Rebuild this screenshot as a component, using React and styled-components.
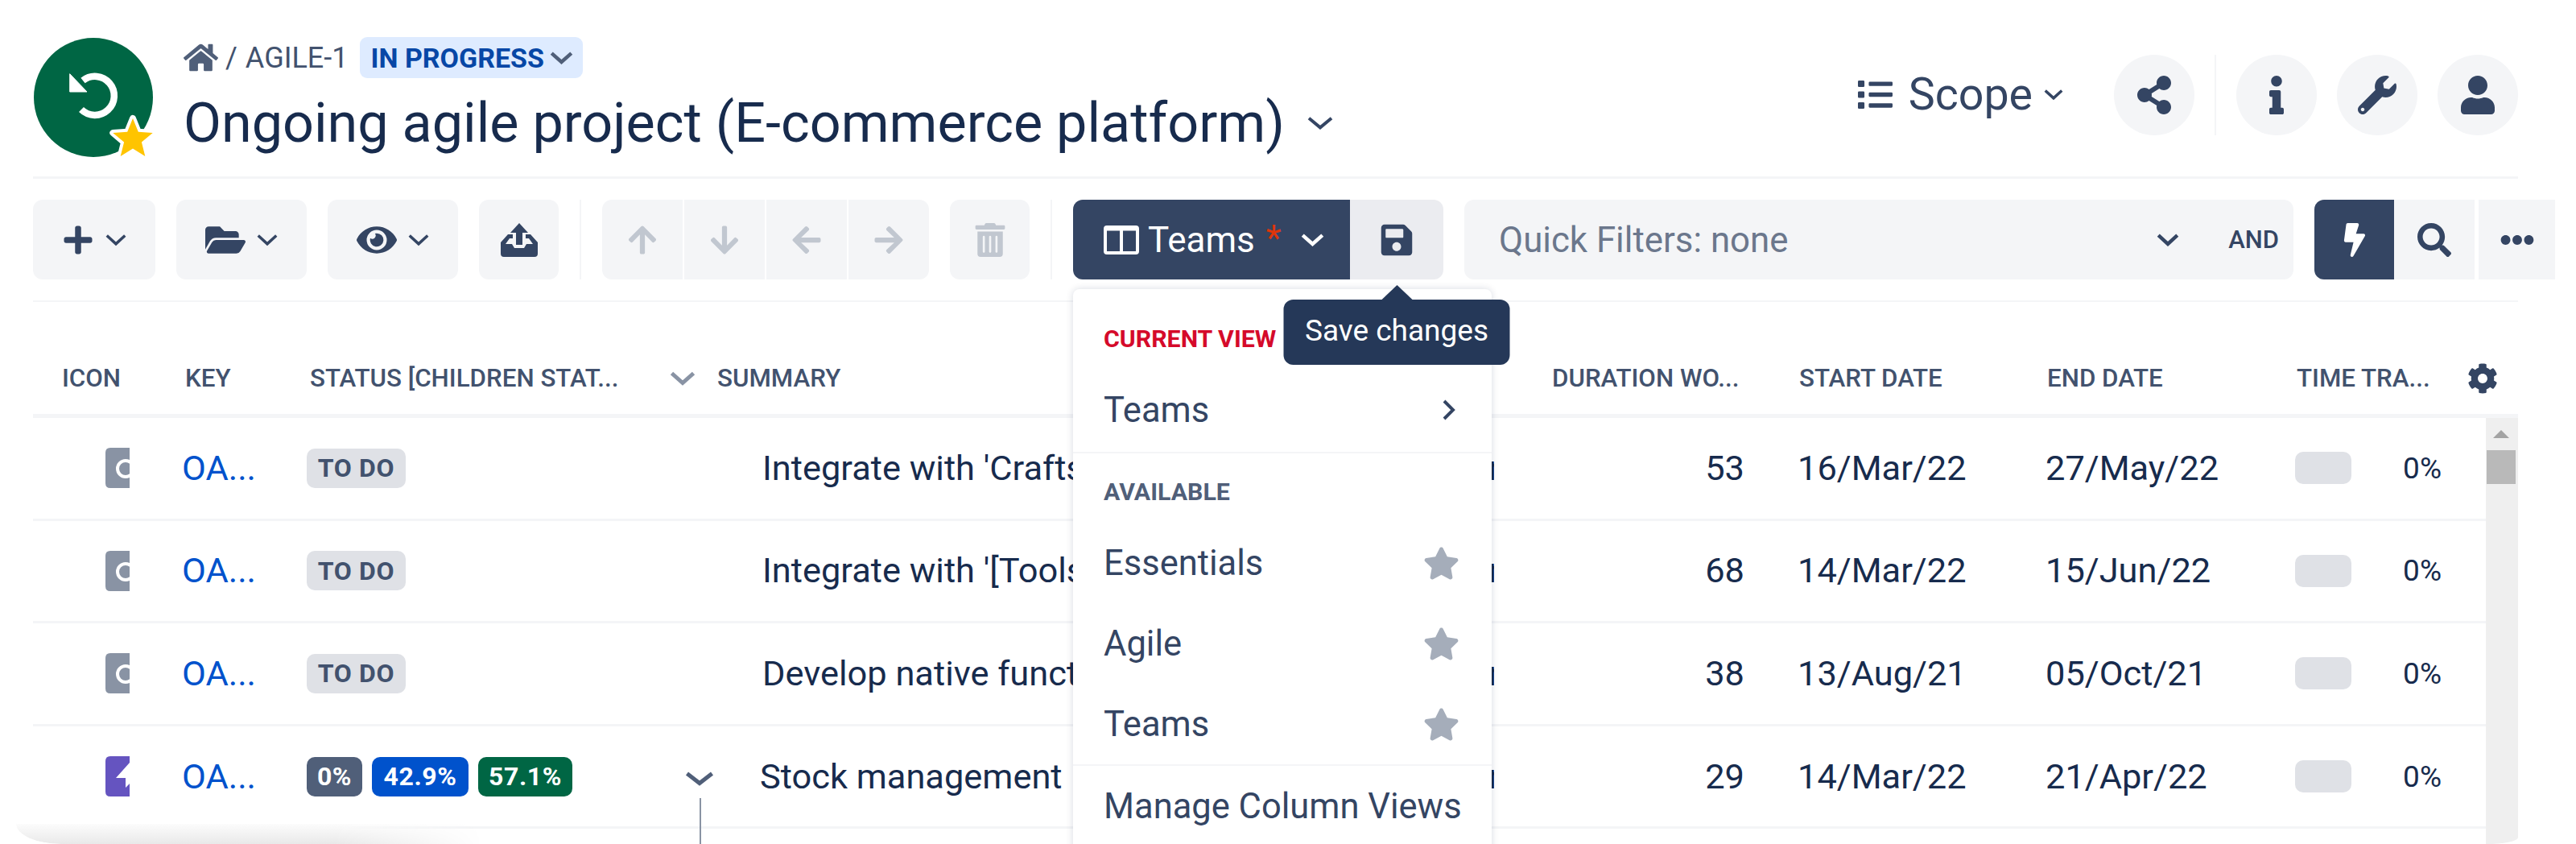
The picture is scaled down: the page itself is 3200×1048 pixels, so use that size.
import styled, { createGlobalStyle } from 'styled-components';
import {
  FaHome, FaPlus, FaFolderOpen, FaEye, FaArrowUp, FaArrowDown, FaArrowLeft, FaArrowRight, FaTrashAlt,
  FaSave, FaBolt, FaSearch, FaEllipsisH, FaCog, FaStar, FaShareAlt, FaInfo, FaWrench, FaUser, FaList,
} from 'react-icons/fa';

const GlobalStyle = createGlobalStyle`
  html, body {
    margin: 0;
    padding: 0;
    background: #fff;
  }
  body {
    font-family: Roboto, "Liberation Sans", sans-serif;
    color: #172b4d;
  }
`;

const Page = styled.div`
  position: relative;
  width: 3200px;
  height: 1048px;
  padding-left: 41px;
  box-sizing: border-box;
  overflow: hidden;
  background: #fff;
`;

const Header = styled.header`
  display: flex;
  justify-content: space-between;
  align-items: flex-start;
  width: 3087px;
  height: 222px;
  padding-top: 46px;
  box-sizing: border-box;
  border-bottom: 3px solid #f4f5f7;
`;

const Brand = styled.div`
  display: flex;
`;

const Logo = styled.svg`
  width: 152px;
  height: 154px;
  margin-right: 35px;
  flex: none;
`;

const Titles = styled.div`
  display: flex;
  flex-direction: column;
`;

const Crumbs = styled.div`
  display: flex;
  align-items: center;
  height: 51px;
  font-size: 36px;
  color: #42526e;
  svg:first-child {
    font-size: 43px;
    color: #505f79;
  }
`;

const Slash = styled.span`
  margin: 0 10px 0 9px;
`;

const StatusPill = styled.span`
  display: flex;
  align-items: center;
  gap: 7px;
  height: 51px;
  margin-left: 14px;
  padding: 0 12px 0 14px;
  box-sizing: border-box;
  border-radius: 9px;
  background: #deebff;
  color: #0747a6;
  font-size: 34px;
  font-weight: 700;
`;

const TitleLine = styled.h1`
  display: flex;
  align-items: center;
  gap: 28px;
  height: 80px;
  margin: 16px 0 0;
  font-size: 68.3px;
  font-weight: 400;
  color: #172b4d;
`;

const Actions = styled.div`
  display: flex;
  align-items: center;
  gap: 25px;
  margin-top: 22px;
`;

const Scope = styled.div`
  display: flex;
  align-items: center;
  margin-right: 38px;
  margin-top: -2px;
  font-size: 55.5px;
  color: #344563;
  svg:first-child {
    font-size: 43px;
    margin-right: 20px;
  }
  svg:last-child {
    margin-left: 14px;
  }
`;

const RoundButton = styled.button`
  display: flex;
  align-items: center;
  justify-content: center;
  width: 100px;
  height: 100px;
  padding: 0;
  border: 0;
  border-radius: 50%;
  background: #f4f5f7;
  color: #344563;
  font-size: 48px;
`;

const HeaderSep = styled.div`
  width: 2px;
  height: 100px;
  background: #f4f5f7;
`;

const Toolbar = styled.div`
  display: flex;
  align-items: stretch;
  gap: 26px;
  width: 3133px;
  height: 99px;
  margin-top: 26px;
`;

const ToolButton = styled.button`
  display: flex;
  align-items: center;
  justify-content: center;
  gap: 14px;
  width: ${(p) => p.$w}px;
  padding: 0;
  border: 0;
  border-radius: 12px;
  background: #f4f5f7;
  color: #344563;
  svg:first-child {
    font-size: ${(p) => p.$icon || 44}px;
  }
`;

const ToolSep = styled.div`
  width: 2px;
  background: #f4f5f7;
`;

const MoveGroup = styled.div`
  display: flex;
  gap: 2px;
`;

const MoveButton = styled.button`
  display: flex;
  align-items: center;
  justify-content: center;
  width: 100px;
  padding: 0;
  border: 0;
  background: #f4f5f7;
  color: #c1c7d0;
  font-size: 40px;
  &:first-child {
    border-radius: 12px 0 0 12px;
  }
  &:last-child {
    border-radius: 0 12px 12px 0;
  }
`;

const TrashButton = styled(ToolButton)`
  color: #c1c7d0;
`;

const ViewGroup = styled.div`
  position: relative;
  display: flex;
`;

const ViewButton = styled.button`
  display: flex;
  align-items: center;
  width: 344px;
  padding: 0 0 0 38px;
  box-sizing: border-box;
  border: 0;
  border-radius: 12px 0 0 12px;
  background: #344563;
  color: #fff;
  font-family: inherit;
  font-size: 44px;
  svg:first-child {
    margin-right: 11px;
  }
  svg:last-child {
    margin-left: 24px;
  }
`;

const Asterisk = styled.span`
  margin-left: 14px;
  margin-top: -4px;
  color: #de350b;
`;

const SaveButton = styled.button`
  position: relative;
  display: flex;
  align-items: center;
  justify-content: center;
  width: 116px;
  padding: 0;
  border: 0;
  border-radius: 0 12px 12px 0;
  background: #ebecf0;
  color: #344563;
  font-family: inherit;
  font-size: 44px;
`;

const Tooltip = styled.div`
  position: absolute;
  top: 124px;
  left: 50%;
  transform: translateX(-50%);
  z-index: 3;
  width: 281px;
  height: 81px;
  line-height: 78px;
  border-radius: 12px;
  background: #253858;
  color: #fff;
  font-size: 37px;
  text-align: center;
  white-space: nowrap;
  &::before {
    content: '';
    position: absolute;
    top: -18px;
    left: 50%;
    margin-left: -19px;
    border-left: 19px solid transparent;
    border-right: 19px solid transparent;
    border-bottom: 18px solid #253858;
  }
`;

const Menu = styled.div`
  position: absolute;
  top: 111px;
  left: 0;
  z-index: 2;
  width: 520px;
  height: 720px;
  padding-top: 52px;
  box-sizing: border-box;
  border-radius: 8px;
  background: #fff;
  box-shadow: 0 0 10px rgba(9, 30, 66, 0.16);
`;

const MenuHeading = styled.div`
  padding: ${(p) => p.$top || 0}px 38px ${(p) => p.$bottom || 0}px;
  font-size: 30.3px;
  font-weight: 700;
  line-height: 20px;
  color: ${(p) => p.$color};
  white-space: nowrap;
`;

const MenuItem = styled.div`
  display: flex;
  align-items: center;
  justify-content: space-between;
  height: ${(p) => p.$h || 100}px;
  padding: ${(p) => p.$top || 0}px 40px 0 38px;
  box-sizing: border-box;
  font-size: 43.5px;
  color: #344563;
  white-space: nowrap;
  svg {
    color: #a5adba;
    font-size: 45px;
  }
`;

const MenuArrow = styled.span`
  display: flex;
  margin-right: 5px;
`;

const MenuDivider = styled.div`
  height: 2px;
  background: #f4f5f7;
`;

const QuickFilter = styled.div`
  display: flex;
  align-items: center;
  flex: 1;
  padding: 0 18px 0 43px;
  border-radius: 12px;
  background: #f4f5f7;
`;

const QuickText = styled.span`
  flex: 1;
  font-size: 43.8px;
  color: #6b778c;
`;

const AndLabel = styled.span`
  margin-left: 61px;
  font-size: 31px;
  font-weight: 500;
  color: #344563;
`;

const ModeGroup = styled.div`
  display: flex;
`;

const ModeButton = styled.button`
  display: flex;
  align-items: center;
  justify-content: center;
  width: ${(p) => p.$w}px;
  margin-left: ${(p) => p.$gap || 0}px;
  padding: 0;
  border: 0;
  border-radius: ${(p) => (p.$active ? '12px 0 0 12px' : '0')};
  background: ${(p) => (p.$active ? '#344563' : '#f4f5f7')};
  color: ${(p) => (p.$active ? '#fff' : '#344563')};
  font-size: 42px;
`;

const TableHead = styled.div`
  display: grid;
  grid-template-columns: 185px 155px 449px 60px 970px 371px 308px 312px 277px;
  align-items: center;
  width: 3087px;
  height: 89px;
  padding-top: 50px;
  margin-top: 26px;
  border-top: 2px solid #f4f5f7;
  border-bottom: 5px solid #f4f5f7;
  font-size: 31.3px;
  font-weight: 500;
  color: #42526e;
`;

const HeadCell = styled.div`
  display: flex;
  align-items: center;
  justify-content: space-between;
  padding-left: ${(p) => p.$pad || 0}px;
  white-space: nowrap;
  color: ${(p) => (p.$muted ? '#8993a4' : 'inherit')};
`;

const GearIcon = styled(FaCog)`
  color: #344563;
  font-size: 38px;
  margin-right: 25px;
`;

const TableBody = styled.div`
  display: flex;
  width: 3087px;
  height: 529px;
`;

const Rows = styled.div`
  flex: 1;
  overflow: hidden;
`;

const Row = styled.div`
  display: grid;
  grid-template-columns: 185px 155px 449px 60px 970px 371px 308px 312px 236px;
  align-items: center;
  height: 127.6px;
  box-sizing: border-box;
  border-bottom: 3px solid #f4f5f7;
  font-size: 43.4px;
  color: #172b4d;
`;

const IconCell = styled.div`
  display: flex;
  padding-left: 90px;
`;

const IssueIcon = styled.svg`
  display: block;
  width: 30px;
  height: 50px;
`;

const KeyCell = styled.a`
  color: #0052cc;
`;

const StatusCell = styled.div`
  display: flex;
  gap: 12px;
`;

const Lozenge = styled.span`
  display: flex;
  align-items: center;
  justify-content: center;
  width: ${(p) => p.$w}px;
  height: 49px;
  border-radius: 10px;
  background: ${(p) => p.$bg};
  color: ${(p) => p.$fg || '#fff'};
  font-size: 32px;
  font-weight: 700;
  letter-spacing: 0.6px;
`;

const TreeCell = styled.div`
  position: relative;
  height: 100%;
  color: #505f79;
`;

const TreeToggle = styled.div`
  position: absolute;
  left: 21px;
  top: 50%;
  margin-top: -7px;
  display: flex;
`;

const TreeLine = styled.div`
  position: absolute;
  left: 39px;
  top: ${(p) => p.$top}px;
  bottom: ${(p) => p.$bottom}px;
  width: 2px;
  background: #8993a4;
`;

const SummaryCell = styled.div`
  display: flex;
  justify-content: space-between;
  padding-left: ${(p) => p.$pad}px;
  width: 966px;
  box-sizing: border-box;
  white-space: nowrap;
`;

const SummaryText = styled.span`
  flex: 1;
  min-width: 0;
  overflow: hidden;
`;

/* only the first stem of the last letter shows past the menu */
const SummaryEnd = styled.span`
  flex: none;
  width: 7px;
  overflow: hidden;
`;

const NumberCell = styled.div`
  padding-right: 64px;
  text-align: right;
`;

const DateCell = styled.div`
  padding-left: 2px;
`;

const TimeCell = styled.div`
  display: flex;
  align-items: center;
  justify-content: space-between;
  width: 182px;
  font-size: 37px;
`;

const TimeBar = styled.div`
  width: 70px;
  height: 40px;
  border-radius: 10px;
  background: #dfe1e6;
`;

const Scrollbar = styled.div`
  position: relative;
  flex: none;
  width: 40px;
  background: #efefef;
  border-bottom-right-radius: 40px 8px;
`;

const ScrollArrow = styled.div`
  position: absolute;
  top: 15px;
  left: 9px;
  border-left: 10px solid transparent;
  border-right: 10px solid transparent;
  border-bottom: 10px solid #a3a3a3;
`;

const ScrollThumb = styled.div`
  position: absolute;
  top: 40px;
  left: 1px;
  width: 36px;
  height: 42px;
  background: #b9b9b9;
`;

const BottomShade = styled.div`
  position: absolute;
  left: 20px;
  bottom: 0;
  width: 580px;
  height: 25px;
  border-bottom-left-radius: 56px 25px;
  background: linear-gradient(to bottom, #fcfcfc, #e9e9e9);
  mask-image: linear-gradient(to right, #000 68%, transparent);
  z-index: 1;
`;

const Chevron = ({ w, h, sw = 4, color = 'currentColor' }) => (
  <svg width={w} height={h} viewBox={`0 0 ${w} ${h}`} fill="none" stroke={color} strokeWidth={sw}>
    <polyline points={`${sw / 2},${sw * 0.7} ${w / 2},${h - sw * 0.9} ${w - sw / 2},${sw * 0.7}`} />
  </svg>
);

const UploadIcon = () => (
  <svg width="46" height="42" viewBox="0 0 46 42" fill="#344563">
    <path d="M23 0 L34 12 H27 V27 H19 V12 H12 Z" />
    <path d="M0 24 L9 14 H15 V19 H11 L6 26 H14 L17 31 H29 L32 26 H40 L35 19 H31 V14 H37 L46 24 V38 Q46 42 42 42 H4 Q0 42 0 38 Z" />
  </svg>
);

const ColumnsIcon = () => (
  <svg width="44" height="38" viewBox="0 0 44 38" fill="none" stroke="#fff">
    <rect x="2" y="3" width="40" height="32" rx="2" strokeWidth="4" />
    <path d="M22 3 V35" strokeWidth="4" />
    <path d="M2 5 H42" strokeWidth="5" />
  </svg>
);

const rows = [
  { color: '#8993a4', kind: 'ring', status: 'todo', text: "Integrate with 'Craftsman' marketing automatio", tail: 'n', num: 53, start: '16/Mar/22', end: '27/May/22' },
  { color: '#8993a4', kind: 'ring', status: 'todo', text: "Integrate with '[Tools]' reporting configuratio", tail: 'n', num: 68, start: '14/Mar/22', end: '15/Jun/22' },
  { color: '#8993a4', kind: 'ring', status: 'todo', text: 'Develop native functionality for mobile applicatio', tail: 'n', num: 38, start: '13/Aug/21', end: '05/Oct/21' },
  { color: '#6554c0', kind: 'bolt', status: 'split', text: 'Stock management', tail: 'n', num: 29, start: '14/Mar/22', end: '21/Apr/22', open: true },
];

const App = () => {
  return (
    <Page>
      <GlobalStyle />
      <Header>
        <Brand>
          <Logo viewBox="0 0 152 154">
            <circle cx="75" cy="75" r="74" fill="#006644" />
            <path d="M62 54 A24 24 0 1 1 60 90" fill="none" stroke="#fff" strokeWidth="8.5" />
            <polygon points="45.7,45.7 45.7,68 67,68" fill="#fff" stroke="#fff" strokeWidth="1" />
            <polygon
              points="124,101 130.8,117.7 148.7,119 134.9,130.6 139.3,148 124,138.5 108.7,148 113.1,130.6 99.3,119 117.2,117.7"
              fill="#ffc400"
              stroke="#fff"
              strokeWidth="8"
              paintOrder="stroke"
              strokeLinejoin="round"
            />
          </Logo>
          <Titles>
            <Crumbs>
              <FaHome />
              <Slash>/</Slash>
              AGILE-1
              <StatusPill>
                IN PROGRESS
                <Chevron w={29} h={18} sw={4.5} />
              </StatusPill>
            </Crumbs>
            <TitleLine>
              Ongoing agile project (E-commerce platform)
              <Chevron w={32} h={18} sw={4} color="#344563" />
            </TitleLine>
          </Titles>
        </Brand>
        <Actions>
          <Scope>
            <FaList />
            Scope
            <Chevron w={24} h={15} sw={3.5} />
          </Scope>
          <RoundButton><FaShareAlt /></RoundButton>
          <HeaderSep />
          <RoundButton><FaInfo /></RoundButton>
          <RoundButton><FaWrench /></RoundButton>
          <RoundButton><FaUser /></RoundButton>
        </Actions>
      </Header>

      <Toolbar>
        <ToolButton $w={152} $icon={40}>
          <FaPlus />
          <Chevron w={26} h={16} sw={3.5} />
        </ToolButton>
        <ToolButton $w={162} $icon={50}>
          <FaFolderOpen />
          <Chevron w={26} h={16} sw={3.5} />
        </ToolButton>
        <ToolButton $w={162} $icon={50}>
          <FaEye />
          <Chevron w={26} h={16} sw={3.5} />
        </ToolButton>
        <ToolButton $w={99}>
          <UploadIcon />
        </ToolButton>
        <ToolSep />
        <MoveGroup>
          <MoveButton><FaArrowUp /></MoveButton>
          <MoveButton><FaArrowDown /></MoveButton>
          <MoveButton><FaArrowLeft /></MoveButton>
          <MoveButton><FaArrowRight /></MoveButton>
        </MoveGroup>
        <TrashButton $w={99} $icon={42}>
          <FaTrashAlt />
        </TrashButton>
        <ToolSep />
        <ViewGroup>
          <ViewButton>
            <ColumnsIcon />
            Teams
            <Asterisk>*</Asterisk>
            <Chevron w={29} h={18} sw={4.5} />
          </ViewButton>
          <SaveButton>
            <FaSave />
            <Tooltip>Save changes</Tooltip>
          </SaveButton>
          <Menu>
            <MenuHeading $color="#d50a2a">CURRENT VIEW</MenuHeading>
            <MenuItem $h={130} $top={26}>
              Teams
              <MenuArrow>
                <svg width="16" height="26" viewBox="0 0 16 26" fill="none" stroke="#344563" strokeWidth="4">
                  <polyline points="2,2 13,13 2,24" />
                </svg>
              </MenuArrow>
            </MenuItem>
            <MenuDivider />
            <MenuHeading $color="#505f79" $top={38} $bottom={28}>AVAILABLE</MenuHeading>
            <MenuItem>Essentials<FaStar /></MenuItem>
            <MenuItem>Agile<FaStar /></MenuItem>
            <MenuItem>Teams<FaStar /></MenuItem>
            <MenuDivider />
            <MenuItem>Manage Column Views</MenuItem>
          </Menu>
        </ViewGroup>
        <QuickFilter>
          <QuickText>Quick Filters: none</QuickText>
          <Chevron w={28} h={18} sw={4.5} color="#344563" />
          <AndLabel>AND</AndLabel>
        </QuickFilter>
        <ModeGroup>
          <ModeButton $active $w={99}><FaBolt /></ModeButton>
          <ModeButton $w={100}><FaSearch /></ModeButton>
          <ModeButton $w={95} $gap={5}><FaEllipsisH /></ModeButton>
        </ModeGroup>
      </Toolbar>

      <TableHead>
        <HeadCell $pad={36}>ICON</HeadCell>
        <HeadCell $pad={4}>KEY</HeadCell>
        <HeadCell $pad={4}>STATUS [CHILDREN STAT...</HeadCell>
        <HeadCell $pad={2} $muted><Chevron w={32} h={20} sw={5} /></HeadCell>
        <HeadCell $pad={1}>SUMMARY</HeadCell>
        <HeadCell $pad={68}>DURATION WO...</HeadCell>
        <HeadCell $pad={4}>START DATE</HeadCell>
        <HeadCell $pad={4}>END DATE</HeadCell>
        <HeadCell $pad={2}>TIME TRA...<GearIcon /></HeadCell>
      </TableHead>

      <TableBody>
        <Rows>
          {rows.map((row) => (
            <Row key={row.text}>
              <IconCell>
                <IssueIcon viewBox="0 0 30 50">
                  <path d="M6 0 H30 V50 H6 Q0 50 0 44 V6 Q0 0 6 0 Z" fill={row.color} />
                  {row.kind === 'ring' ? (
                    <circle cx="25" cy="26" r="10" fill="none" stroke="#fff" strokeWidth="4" />
                  ) : (
                    <polygon points="30,8 13,27 25,27 25,39 30,34" fill="#fff" />
                  )}
                </IssueIcon>
              </IconCell>
              <KeyCell>OA...</KeyCell>
              <StatusCell>
                {row.status === 'todo' ? (
                  <Lozenge $w={123} $bg="#dfe1e6" $fg="#42526e">TO DO</Lozenge>
                ) : (
                  <>
                    <Lozenge $w={69} $bg="#505f79">0%</Lozenge>
                    <Lozenge $w={120} $bg="#0052cc">42.9%</Lozenge>
                    <Lozenge $w={117} $bg="#006644">57.1%</Lozenge>
                  </>
                )}
              </StatusCell>
              <TreeCell>
                {row.open && (
                  <>
                    <TreeToggle><Chevron w={36} h={20} sw={5} /></TreeToggle>
                    <TreeLine $top={89} $bottom={-3} />
                  </>
                )}
              </TreeCell>
              <SummaryCell $pad={row.open ? 54 : 57}>
                <SummaryText>{row.text}</SummaryText>
                <SummaryEnd>{row.tail}</SummaryEnd>
              </SummaryCell>
              <NumberCell>{row.num}</NumberCell>
              <DateCell>{row.start}</DateCell>
              <DateCell>{row.end}</DateCell>
              <TimeCell>
                <TimeBar />
                0%
              </TimeCell>
            </Row>
          ))}
          <Row>
            <span />
            <span />
            <span />
            <TreeCell><TreeLine $top={0} $bottom={0} /></TreeCell>
          </Row>
        </Rows>
        <Scrollbar>
          <ScrollArrow />
          <ScrollThumb />
        </Scrollbar>
      </TableBody>
      <BottomShade />
    </Page>
  );
};

export default App;
